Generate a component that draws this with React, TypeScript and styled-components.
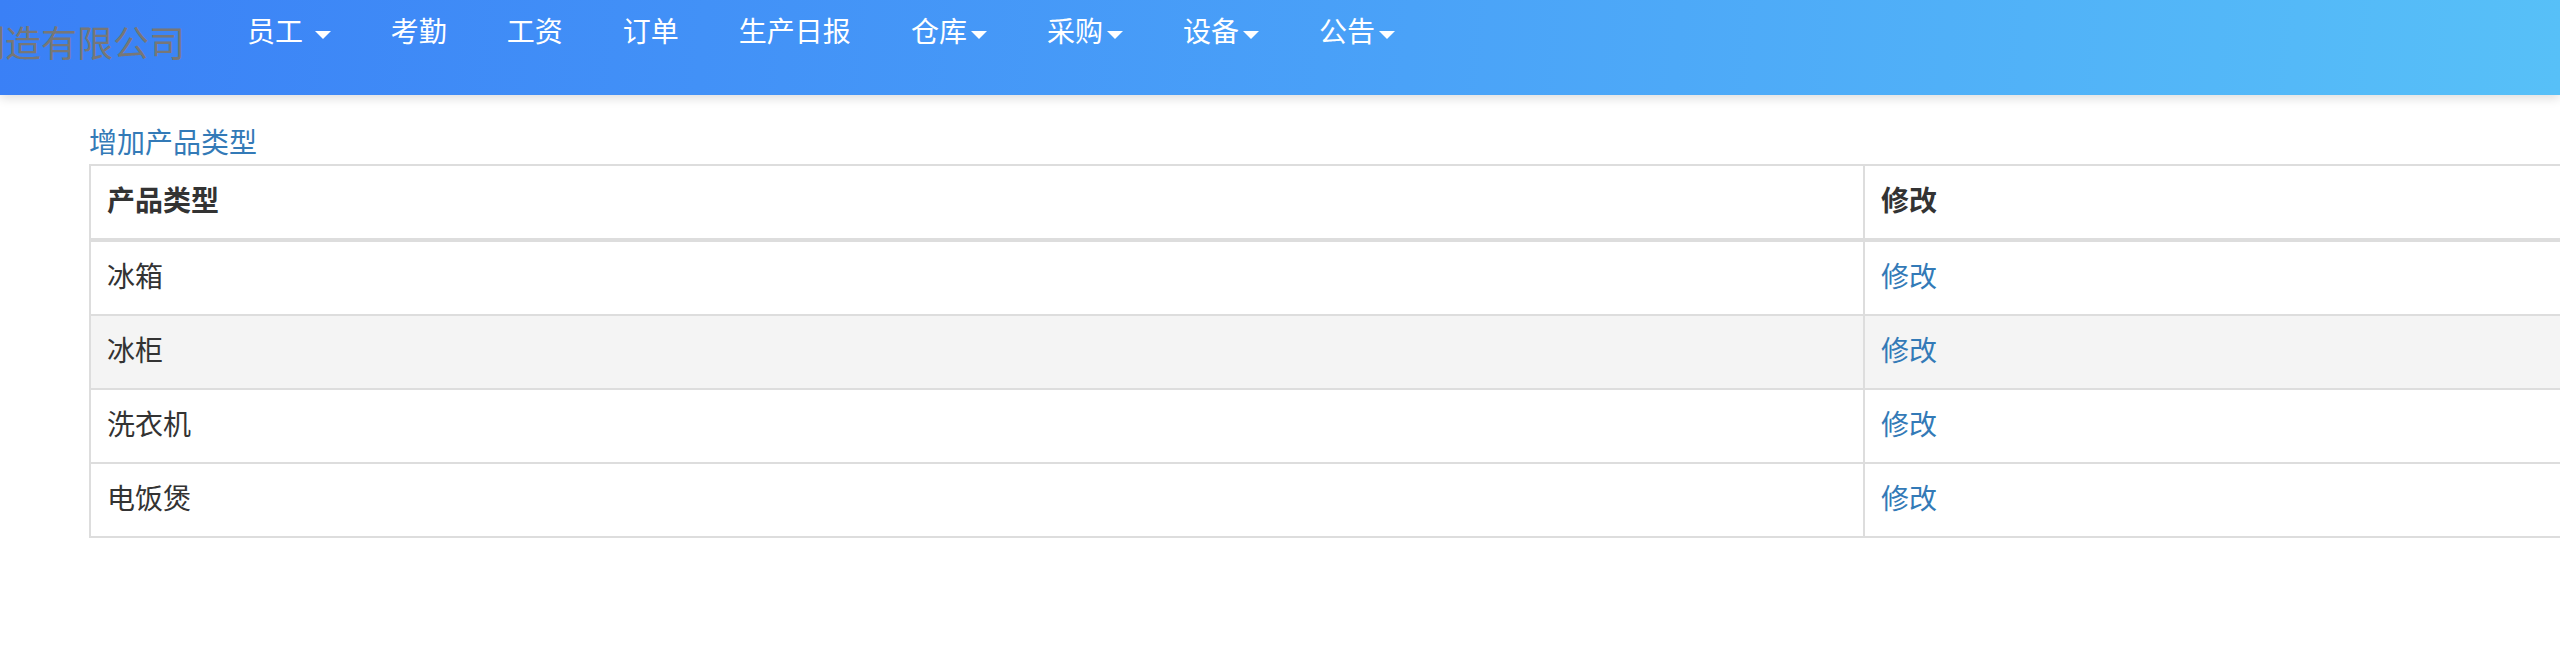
import React from "react";
import styled, { createGlobalStyle } from "styled-components";

const GlobalStyle = createGlobalStyle`
  html, body {
    margin: 0;
    padding: 0;
    background: #ffffff;
    overflow: hidden;
  }
  body {
    font-family: "Liberation Sans", "Noto Sans CJK SC", sans-serif;
    font-size: 28px;
    color: #333333;
  }
  #root {
    width: 2560px;
    overflow: hidden;
  }
`;

const NavBar = styled.header`
  display: flex;
  align-items: flex-start;
  height: 95px;
  background: linear-gradient(95deg, #3a80f6 0%, #4aa2f8 55%, #57c0f8 100%);
  box-shadow: 0 3px 10px rgba(0, 0, 0, 0.14);
  position: relative;
  z-index: 1;
`;

const Brand = styled.div`
  flex: none;
  margin-left: -103px;
  padding: 25px 32px 0 0;
  font-size: 36px;
  line-height: 40px;
  color: #777777;
  white-space: nowrap;
`;

const NavList = styled.nav`
  display: flex;
  align-items: flex-start;
`;

const NavLink = styled.a`
  display: flex;
  align-items: center;
  padding: 13px 30px;
  font-size: 28px;
  line-height: 40px;
  color: #ffffff;
  text-decoration: none;
  white-space: pre;
  cursor: pointer;
`;

const Caret = styled.span`
  display: inline-block;
  width: 0;
  height: 0;
  margin-left: 4px;
  margin-top: 4px;
  border-top: 8px solid #ffffff;
  border-left: 8px solid transparent;
  border-right: 8px solid transparent;
`;

const Main = styled.main`
  padding: 29px 0 0 89px;
`;

const AddLink = styled.a`
  display: block;
  font-size: 28px;
  line-height: 40px;
  color: #337ab7;
  text-decoration: none;
  cursor: pointer;
`;

const Table = styled.table`
  width: 2560px;
  border-collapse: collapse;
  table-layout: fixed;
  font-size: 28px;
  line-height: 40px;
`;

const HeadCell = styled.th<{ $w?: number }>`
  width: ${(p) => (p.$w ? `${p.$w}px` : "auto")};
  padding: 16px;
  text-align: left;
  font-weight: 700;
  color: #333333;
  border: 2px solid #dddddd;
  border-bottom-width: 4px;
`;

const Row = styled.tr<{ $shaded?: boolean }>`
  background: ${(p) => (p.$shaded ? "#f4f4f4" : "#ffffff")};
`;

const Cell = styled.td`
  padding: 16px;
  border: 2px solid #dddddd;
  color: #333333;
`;

const EditLink = styled.a`
  color: #337ab7;
  text-decoration: none;
  cursor: pointer;
`;

const navItems: { label: string; caret?: boolean; spaced?: boolean }[] = [
  { label: "员工", caret: true, spaced: true },
  { label: "考勤" },
  { label: "工资" },
  { label: "订单" },
  { label: "生产日报" },
  { label: "仓库", caret: true },
  { label: "采购", caret: true },
  { label: "设备", caret: true },
  { label: "公告", caret: true },
];

const products = ["冰箱", "冰柜", "洗衣机", "电饭煲"];

export default function App() {
  return (
    <>
      <GlobalStyle />
      <NavBar>
        <Brand>家电制造有限公司</Brand>
        <NavList>
          {navItems.map((item) => (
            <NavLink key={item.label}>
              {item.label}
              {item.spaced ? " " : ""}
              {item.caret && <Caret />}
            </NavLink>
          ))}
        </NavList>
      </NavBar>
      <Main>
        <AddLink>增加产品类型</AddLink>
        <Table>
          <thead>
            <tr>
              <HeadCell $w={1740}>产品类型</HeadCell>
              <HeadCell>修改</HeadCell>
            </tr>
          </thead>
          <tbody>
            {products.map((name, i) => (
              <Row key={name} $shaded={i === 1}>
                <Cell>{name}</Cell>
                <Cell>
                  <EditLink>修改</EditLink>
                </Cell>
              </Row>
            ))}
          </tbody>
        </Table>
      </Main>
    </>
  );
}
